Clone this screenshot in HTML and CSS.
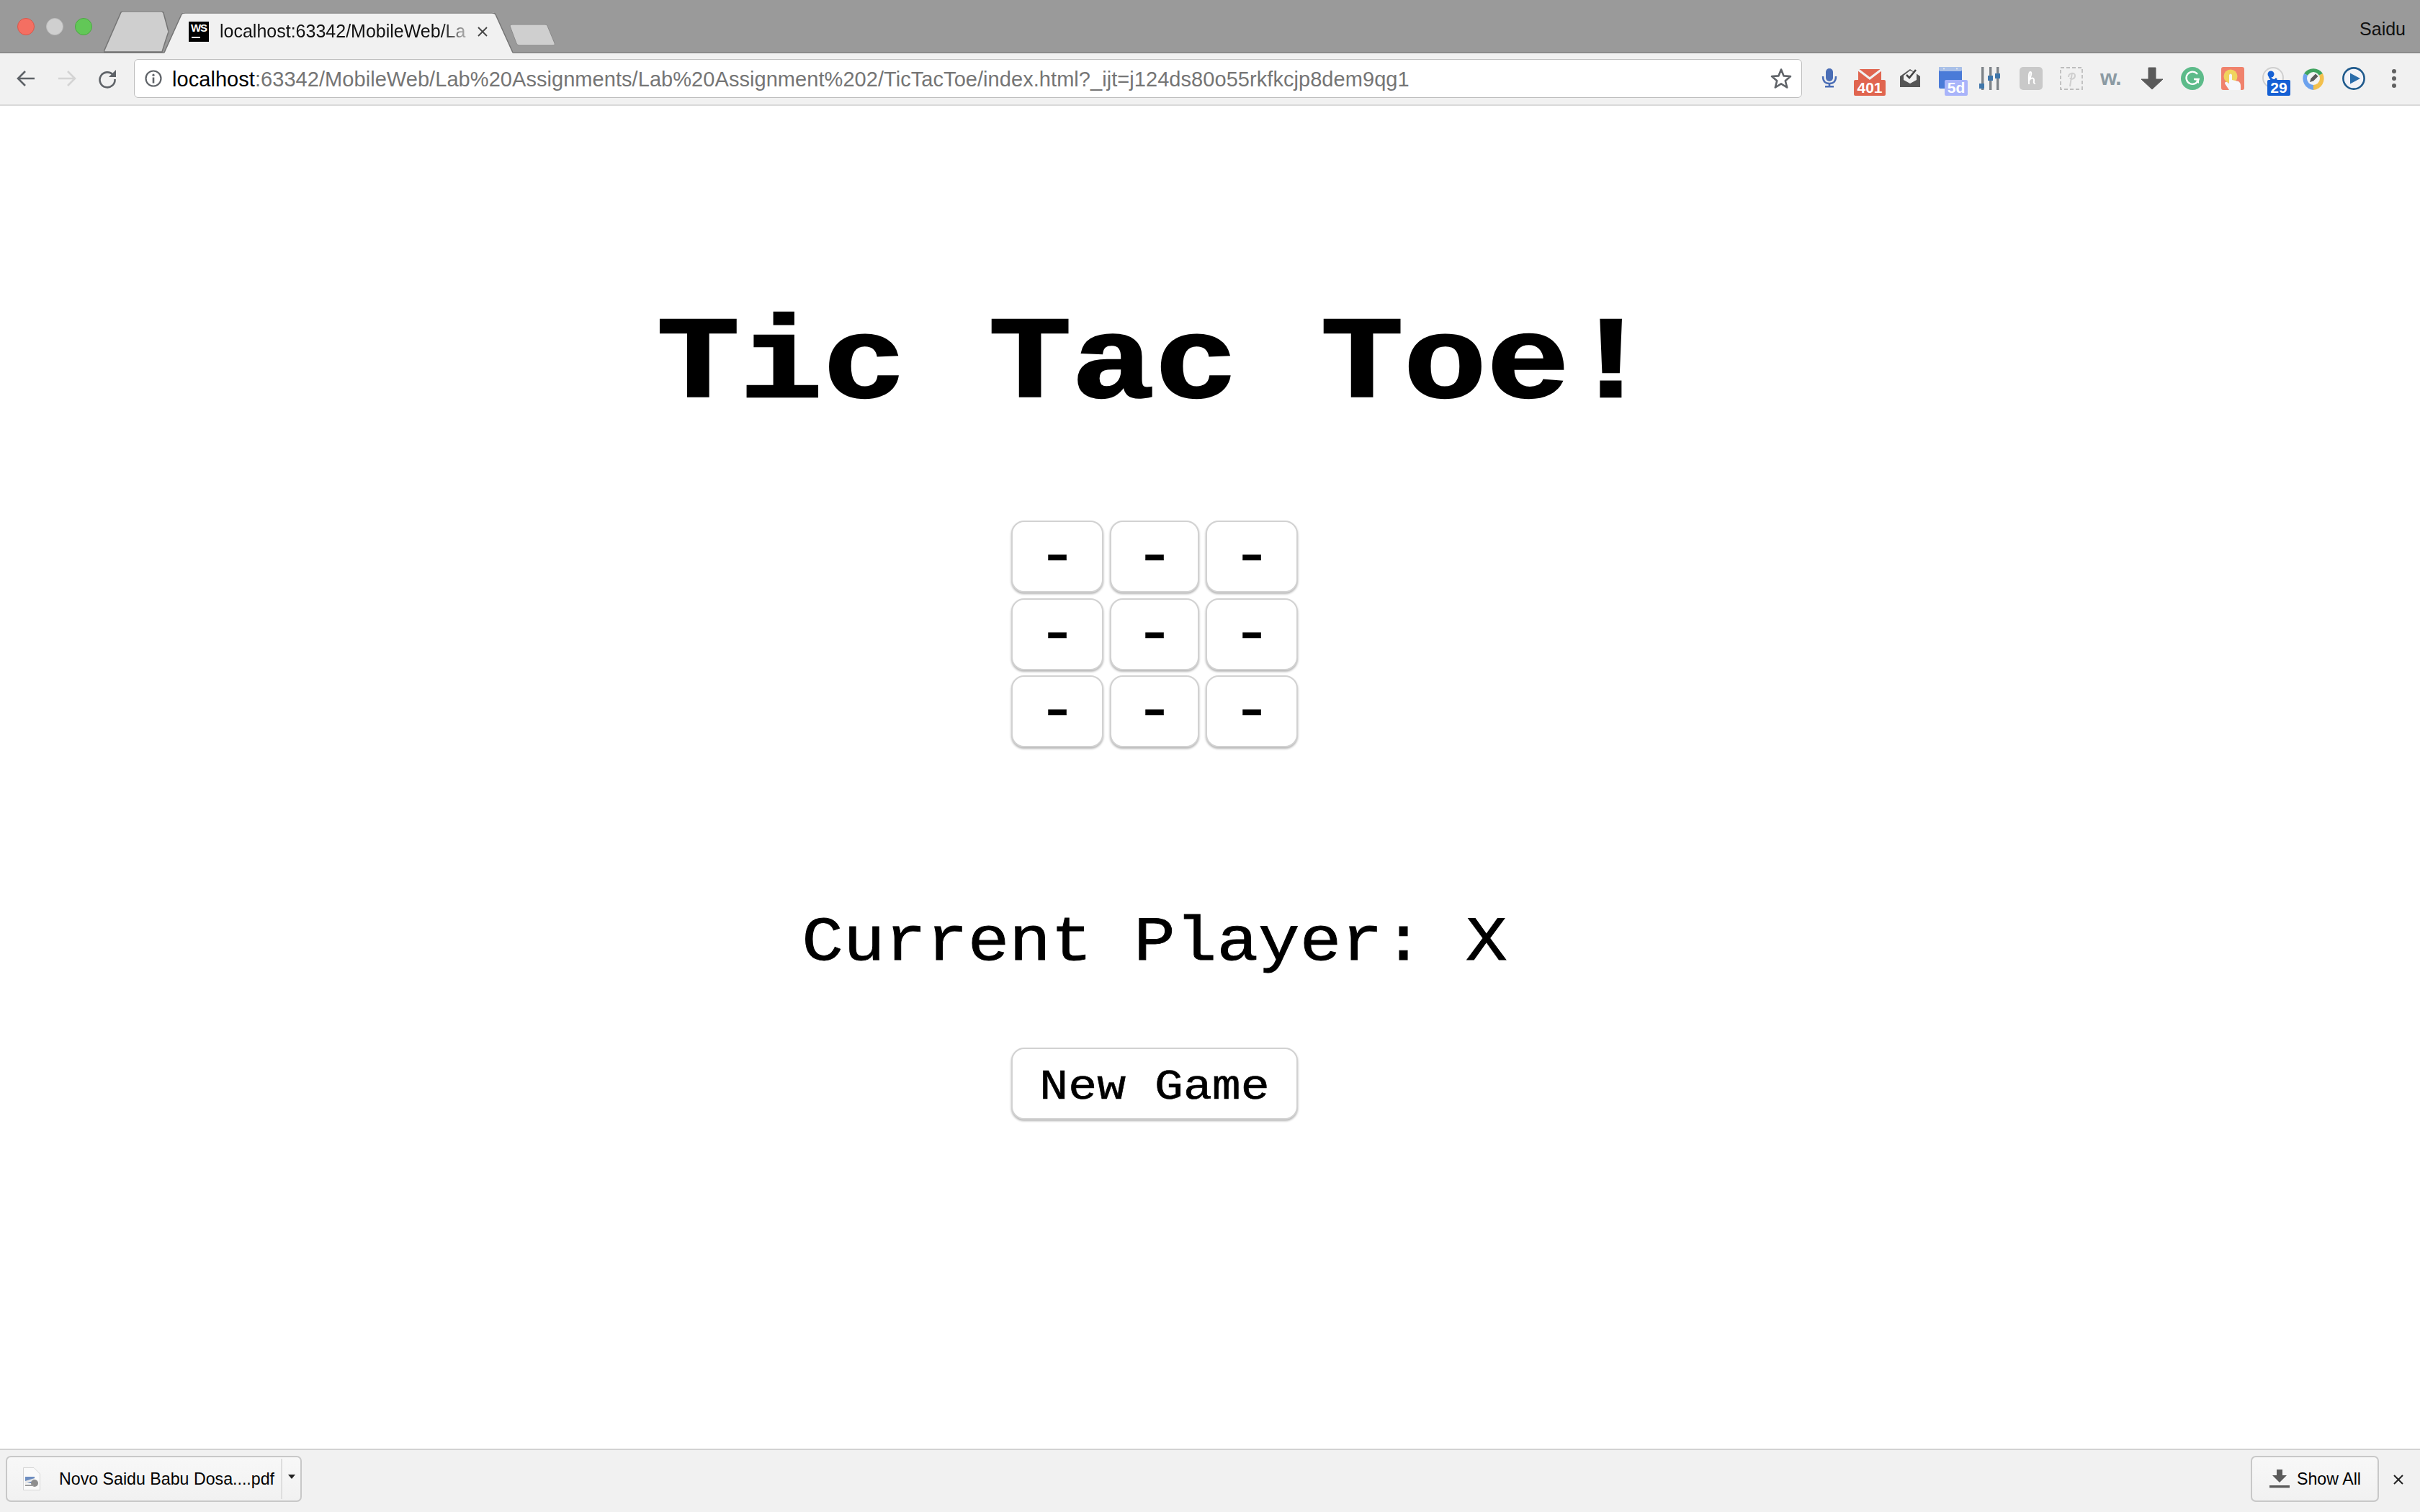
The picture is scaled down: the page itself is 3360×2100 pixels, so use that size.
FILE: index.html
```html
<!DOCTYPE html>
<html lang="en">
<head>
<meta charset="utf-8">
<title>Tic Tac Toe</title>
<link rel="stylesheet" href="styles.css">
</head>
<body>
<div class="window">
  <header class="tabstrip">
    <div class="lights">
      <span class="light red"></span><span class="light gray"></span><span class="light green"></span>
    </div>
    <svg class="tab-inactive" viewBox="0 0 90 57" aria-hidden="true"><path d="M0 56 L24 1 Q25 0 27 0 H80 Q82 0 83 2 L90 28 L86 40 L81 56 Z" fill="#cfcfcf" stroke="#757575" stroke-width="1.5"/></svg>
    <div class="tab-active">
      <svg class="tab-shape" viewBox="0 0 484 57" preserveAspectRatio="none" aria-hidden="true"><path d="M0 57 L24 3 Q25 0 29 0 H455 Q459 0 460 3 L484 57 Z" fill="#f1f1f1"/><path d="M0 56 L24 3 Q25 1 29 1 H455 Q459 1 460 3 L484 56" fill="none" stroke="#757575" stroke-width="1.5"/></svg>
      <span class="favicon"><span class="favicon-text">WS</span><span class="favicon-bar"></span></span>
      <span class="tab-title">localhost:63342/MobileWeb/La</span>
      <svg class="tab-close" viewBox="0 0 16 16" aria-hidden="true"><path d="M2 2 L14 14 M14 2 L2 14" stroke="#444" stroke-width="1.8"/></svg>
    </div>
    <svg class="tab-new" viewBox="0 0 64 31" aria-hidden="true"><path d="M1 3 Q1 1 4 1 H50 Q52 1 53 3 L63 27 Q64 30 60 30 H14 Q11 30 10 27 Z" fill="#cfcfcf" stroke="#8a8a8a" stroke-width="1"/></svg>
    <span class="profile">Saidu</span>
  </header>

  <nav class="toolbar">
    <div class="nav-buttons">
      <svg class="nav-icon" viewBox="0 0 28 28" aria-hidden="true"><path d="M26 14 H4 M13 4 L3 14 L13 24" fill="none" stroke="#5f6368" stroke-width="2.6"/></svg>
      <svg class="nav-icon" viewBox="0 0 28 28" aria-hidden="true"><path d="M2 14 H24 M15 4 L25 14 L15 24" fill="none" stroke="#d4d4d4" stroke-width="2.6"/></svg>
      <svg class="nav-icon nav-reload" viewBox="0 0 28 28" aria-hidden="true"><path d="M22 9 A10.5 10.5 0 1 0 24.5 15" fill="none" stroke="#5f6368" stroke-width="2.6"/><path d="M26 2 V12 H16 Z" fill="#5f6368"/></svg>
    </div>
    <div class="omnibox">
      <svg class="info-icon" viewBox="0 0 24 24" aria-hidden="true"><circle cx="12" cy="12" r="10.5" fill="none" stroke="#5f6368" stroke-width="2.2"/><circle cx="12" cy="7.2" r="1.6" fill="#5f6368"/><rect x="10.7" y="10.5" width="2.6" height="8" fill="#5f6368"/></svg>
      <span class="url"><span class="url-host">localhost</span>:63342/MobileWeb/Lab%20Assignments/Lab%20Assignment%202/TicTacToe/index.html?_ijt=j124ds80o55rkfkcjp8dem9qg1</span>
      <svg class="star-icon" viewBox="0 0 30 30" aria-hidden="true"><path d="M15 2.5 L18.6 11.4 L28 12 L20.8 18.2 L23.2 27.5 L15 22.4 L6.8 27.5 L9.2 18.2 L2 12 L11.4 11.4 Z" fill="none" stroke="#5f6368" stroke-width="2.6" stroke-linejoin="round"/></svg>
    </div>
    <div class="extensions">
      <span class="ext"><svg viewBox="0 0 32 32" aria-hidden="true"><rect x="11" y="2" width="10" height="18" rx="5" fill="#4a6db5"/><path d="M7 13 Q7 23 16 23 Q25 23 25 13" fill="none" stroke="#4a6db5" stroke-width="2.4"/><rect x="14.7" y="22" width="2.6" height="5" fill="#4a6db5"/><rect x="10" y="26" width="12" height="2.5" fill="#4a6db5"/></svg></span>
      <span class="ext"><svg viewBox="0 0 32 32" aria-hidden="true"><rect x="0" y="3" width="32" height="16" fill="#e0654f"/><path d="M-1 3 L16 16 L33 3" fill="none" stroke="#f1f1f1" stroke-width="3"/></svg><span class="badge badge-red">401</span></span>
      <span class="ext"><svg viewBox="0 0 32 32" aria-hidden="true"><path d="M2 13 L16 3 L30 13 V28 H2 Z" fill="#555"/><path d="M7 12 L16 5 L25 9 V18 L16 23 L7 18 Z" fill="#f1f1f1"/><path d="M11 11 L15 15 L24 4" fill="none" stroke="#444" stroke-width="2.6"/></svg></span>
      <span class="ext"><svg viewBox="0 0 32 32" aria-hidden="true"><rect x="0" y="0" width="32" height="30" rx="2" fill="#4a7bd8"/><rect x="0" y="0" width="32" height="6" rx="2" fill="#a9c0e8"/><circle cx="7" cy="2.5" r="1" fill="#eee"/><circle cx="25" cy="2.5" r="1" fill="#eee"/></svg><span class="badge badge-lilac">5d</span></span>
      <span class="ext"><svg viewBox="0 0 32 32" aria-hidden="true"><rect x="3" y="0" width="3.4" height="32" fill="#7d8388"/><rect x="14" y="0" width="3.4" height="32" fill="#7d8388"/><rect x="24" y="0" width="3.4" height="32" fill="#7d8388"/><rect x="0" y="23" width="7" height="7" fill="#3f76aa"/><rect x="12" y="12" width="7" height="7" fill="#3f76aa"/><rect x="22" y="9" width="7" height="7" fill="#3f76aa"/></svg></span>
      <span class="ext"><svg viewBox="0 0 32 32" aria-hidden="true"><rect width="32" height="32" rx="5" fill="#c9c9c9"/><path d="M13 24 C13 16 12 8 15 7 C18 7 15 15 13 19 C15 15 20 14 20 18 C20 21 19 23 22 23" fill="none" stroke="#fff" stroke-width="2"/></svg></span>
      <span class="ext"><svg viewBox="0 0 32 32" aria-hidden="true"><rect x="1" y="1" width="30" height="30" fill="#f1f1f1" stroke="#bdbdbd" stroke-width="1.8" stroke-dasharray="5 3"/><path d="M12 14 C12 8 21 7 21 12 C21 17 15 18 14 15 M17 8 L14 27" fill="none" stroke="#cfcfcf" stroke-width="2"/></svg></span>
      <span class="ext ext-word">w.</span>
      <span class="ext"><svg viewBox="0 0 32 32" aria-hidden="true"><path d="M11 1 H21 V17 H31 L16 31 L1 17 H11 Z" fill="#5a5a5a" stroke="#5a5a5a" stroke-linejoin="round" stroke-width="1"/></svg></span>
      <span class="ext"><svg viewBox="0 0 32 32" aria-hidden="true"><circle cx="16" cy="16" r="16" fill="#5dbb8a"/><path d="M23 10 A8.6 8.6 0 1 0 24.6 17 H18" fill="none" stroke="#fff" stroke-width="2.4"/><path d="M25 18 L25 23 L20 19" fill="#fff"/></svg></span>
      <span class="ext"><svg viewBox="0 0 32 32" aria-hidden="true"><rect width="32" height="32" rx="3" fill="#f0826c"/><circle cx="13" cy="13" r="9.5" fill="#f0d45e"/><path d="M11 32 L5 23 Q5 20 8 21 L11 23 V11 Q13 8 15 11 V18 L24 20 Q27 22 27 26 V32 Z" fill="#f5f7fb"/></svg></span>
      <span class="ext"><svg viewBox="0 0 32 32" aria-hidden="true"><circle cx="16" cy="15" r="14" fill="#f4f4f4" stroke="#cfcfcf" stroke-width="2"/><circle cx="13" cy="10" r="4.5" fill="#1560d4"/><path d="M11 12 Q12 18 18 19 L21 16" fill="none" stroke="#1560d4" stroke-width="3"/></svg><span class="badge badge-blue">29</span></span>
      <span class="ext"><svg viewBox="0 0 32 32" aria-hidden="true"><path d="M3 9 A16 16 0 0 1 29 9 L16 16 Z" fill="#3fa35f"/><path d="M29 9 A16 16 0 0 1 16 32 V16 Z" fill="#f3c04d"/><path d="M16 32 A16 16 0 0 1 3 9 L16 16 Z" fill="#6ca2ee"/><circle cx="16" cy="16" r="9" fill="#f4f4f4"/><path d="M11 21 L12.5 16 L19 9.5 L22.5 13 L16 19.5 Z" fill="#5a5a5a"/></svg></span>
      <span class="ext"><svg viewBox="0 0 32 32" aria-hidden="true"><circle cx="16" cy="16" r="14.6" fill="#f3f3f8" stroke="#1f5a8c" stroke-width="2.6"/><path d="M11 8.5 L25 16 L11 23.5 Z" fill="#2b6cab"/></svg></span>
      <span class="ext"><svg viewBox="0 0 32 32" aria-hidden="true"><circle cx="16" cy="6" r="3" fill="#616161"/><circle cx="16" cy="16" r="3" fill="#616161"/><circle cx="16" cy="26" r="3" fill="#616161"/></svg></span>
    </div>
  </nav>

  <main class="page">
    <h1 class="title">Tic Tac Toe!</h1>
    <div class="board">
      <button class="cell">-</button><button class="cell">-</button><button class="cell">-</button>
      <button class="cell">-</button><button class="cell">-</button><button class="cell">-</button>
      <button class="cell">-</button><button class="cell">-</button><button class="cell">-</button>
    </div>
    <p class="status">Current Player: X</p>
    <button class="new-game"><span class="new-game-label">New Game</span></button>
  </main>

  <footer class="downloads">
    <div class="download-item">
      <svg class="file-icon" viewBox="0 0 24 32" aria-hidden="true"><path d="M.5 .5 H15 L23.5 9 V31.5 H.5 Z" fill="#fafafa" stroke="#d5d5d5"/><rect x="3" y="13" width="13" height="9" fill="#6d8dc0"/><path d="M3 19 L16 15 V18 L3 23 Z" fill="#e8e8e8"/><circle cx="16" cy="22" r="5" fill="#8e8e8e"/><rect x="3" y="24" width="12" height="2" fill="#9a9a9a"/></svg>
      <span class="file-name">Novo Saidu Babu Dosa....pdf</span>
      <span class="download-menu"><svg viewBox="0 0 10 6" aria-hidden="true"><path d="M0 0 H10 L5 6 Z" fill="#222"/></svg></span>
    </div>
    <div class="download-actions">
      <div class="show-all">
        <svg class="show-icon" viewBox="0 0 28 26" aria-hidden="true"><path d="M10 0 H18 V8 H24 L14 18 L4 8 H10 Z" fill="#5a5a5a"/><rect x="0" y="22" width="28" height="3.4" fill="#5a5a5a"/></svg>
        <span class="show-label">Show All</span>
      </div>
      <svg class="bar-close" viewBox="0 0 16 16" aria-hidden="true"><path d="M2 2 L14 14 M14 2 L2 14" stroke="#222" stroke-width="2"/></svg>
    </div>
  </footer>
</div>
</body>
</html>
```

FILE: styles.css
```css
* { box-sizing: border-box; }
html, body { margin: 0; height: 100%; }
body { font-family: "Liberation Sans", Arial, sans-serif; background: #fff; color: #000; overflow: hidden; }

.window { display: flex; flex-direction: column; height: 2100px; }

/* Tab strip */
.tabstrip {
  display: flex; align-items: flex-end; height: 74px; flex: none;
  background: #9a9a9a; border-bottom: 1px solid #757575;
}
.lights { display: flex; gap: 16px; align-self: flex-start; margin: 25px 0 0 24px; width: 120px; }
.light { width: 24px; height: 24px; border-radius: 50%; flex: none; }
.red { background: #f46f62; border: 1px solid #d8574b; }
.gray { background: #cfcfcf; border: 1px solid #bcbcbc; }
.green { background: #62c757; border: 1px solid #4ca843; }
.tab-inactive { width: 90px; height: 57px; flex: none; display: block; }
.tab-active {
  position: relative; display: flex; align-items: center; flex: none;
  width: 484px; height: 57px; margin-left: -6px; margin-bottom: -1px; padding: 0 0 4px 34px;
}
.tab-shape { position: absolute; inset: 0; width: 100%; height: 100%; }
.favicon { position: relative; width: 28px; height: 28px; background: #000; flex: none; display: flex; flex-direction: column; align-items: center; }
.favicon-text { font: bold 15px/17px "Liberation Sans Narrow", "Liberation Sans", sans-serif; color: #fff; letter-spacing: -1px; }
.favicon-bar { width: 12px; height: 2px; background: #fff; margin: 4px 8px 0 0; }
.tab-title {
  position: relative; width: 350px; margin-left: 15px; font-size: 25px; white-space: nowrap; color: #111;
  -webkit-mask-image: linear-gradient(to right, #000 88%, rgba(0,0,0,.12) 100%);
  mask-image: linear-gradient(to right, #000 88%, rgba(0,0,0,.12) 100%);
}
.tab-close { position: relative; width: 16px; height: 16px; margin-left: 7px; flex: none; }
.tab-new { width: 64px; height: 31px; flex: none; margin: 0 0 9px -5px; display: block; }
.profile { margin-left: auto; align-self: flex-start; margin-top: 26px; margin-right: 20px; font-size: 25px; color: #111; }

/* Toolbar */
.toolbar {
  display: flex; align-items: center; height: 73px; flex: none;
  background: #f1f1f1; border-bottom: 2px solid #d9d9d9; padding-bottom: 1px;
}
.nav-buttons { display: flex; gap: 29px; width: 186px; padding-left: 22px; flex: none; }
.nav-icon { width: 28px; height: 28px; flex: none; }
.nav-reload { margin-left: -1px; }
.omnibox {
  display: flex; align-items: center; width: 2316px; height: 54px; flex: none;
  background: #fff; border: 1.5px solid #bdbdbd; border-radius: 6px; padding: 0 13px 0 14px;
}
.info-icon { width: 24px; height: 24px; flex: none; }
.url { margin-left: 14px; padding-top: 2px; font-size: 29px; letter-spacing: .055px; color: #757575; white-space: nowrap; }
.url-host { color: #000; }
.star-icon { width: 30px; height: 30px; margin-left: auto; flex: none; }
.extensions { display: flex; gap: 24px; margin-left: 22px; flex: none; }
.ext { position: relative; width: 32px; height: 32px; flex: none; display: block; }
.ext > svg { width: 32px; height: 32px; display: block; overflow: visible; }
.ext-word { font: bold 30px/30px "Liberation Sans", sans-serif; color: #8b9aa3; letter-spacing: -1px; }
.badge {
  position: absolute; top: 18px; height: 22px; border-radius: 2px; color: #fff;
  font-size: 21px; line-height: 22px; text-align: center; font-weight: 700;
}
.badge-red { left: -6px; width: 44px; background: #e0654f; }
.badge-lilac { left: 8px; width: 32px; background: #a9b4fa; }
.badge-blue { left: 8px; width: 32px; background: #1560d4; }

/* Page */
.page {
  flex: 1; display: flex; flex-direction: column; align-items: center;
  background: #fff; padding: 253px 154px 0 0;
  font-family: "Liberation Mono", "Courier New", monospace;
}
.title {
  margin: 0; font-size: 192px; line-height: 217px; font-weight: 700; white-space: nowrap;
  transform: scaleY(.84); -webkit-text-stroke: 3px #000;
}
.board {
  display: grid; grid-template-columns: 128px 124px 128px; grid-auto-rows: 100px;
  gap: 7.5px 9px; margin-top: 106px;
}
.cell, .new-game {
  font-family: "Liberation Mono", "Courier New", monospace; color: #000; background: #fff;
  border: 2px solid #d2d2d2; border-radius: 18px; padding: 0;
  box-shadow: 0 2px 3px rgba(0,0,0,.3);
}
.cell { font-size: 92px; font-weight: 400; line-height: 1; padding: 4px 0 0; -webkit-text-stroke: .5px #000; }
.status {
  margin: 218px 0 0; font-size: 96px; line-height: 108px; white-space: nowrap;
  transform: scaleY(.9); -webkit-text-stroke: 1px #000;
}
.new-game { width: 398px; height: 100px; margin-top: 91px; font-size: 66.5px; padding-top: 10px; }
.new-game-label { display: inline-block; transform: scaleY(.88); -webkit-text-stroke: .7px #000; }

/* Download bar */
.downloads {
  display: flex; justify-content: space-between; height: 88px; flex: none;
  background: #f1f1f1; border-top: 2px solid #d2d2d2; padding: 8px 22px 0 8px;
}
.download-item, .show-all {
  display: flex; align-items: center; height: 64px;
  border: 2px solid #c8c8c8; border-radius: 7px;
  background: linear-gradient(#f8f8f8, #f1f1f1);
}
.download-item { width: 411px; padding-left: 22px; }
.file-icon { width: 24px; height: 32px; flex: none; }
.file-name { margin-left: 26px; width: 308px; font-size: 23.2px; white-space: nowrap; color: #000; }
.download-menu { display: flex; align-items: center; justify-content: center; flex: 1; height: 56px; border-left: 2px solid #dedede; padding-bottom: 6px; }
.download-menu svg { width: 12px; height: 6px; display: block; }
.download-actions { display: flex; align-items: flex-start; gap: 19px; }
.show-all { width: 178px; padding-left: 24px; }
.show-icon { width: 28px; height: 26px; flex: none; }
.show-label { margin-left: 10px; font-size: 23.2px; white-space: nowrap; }
.bar-close { width: 16px; height: 16px; margin-top: 25px; flex: none; }
```
